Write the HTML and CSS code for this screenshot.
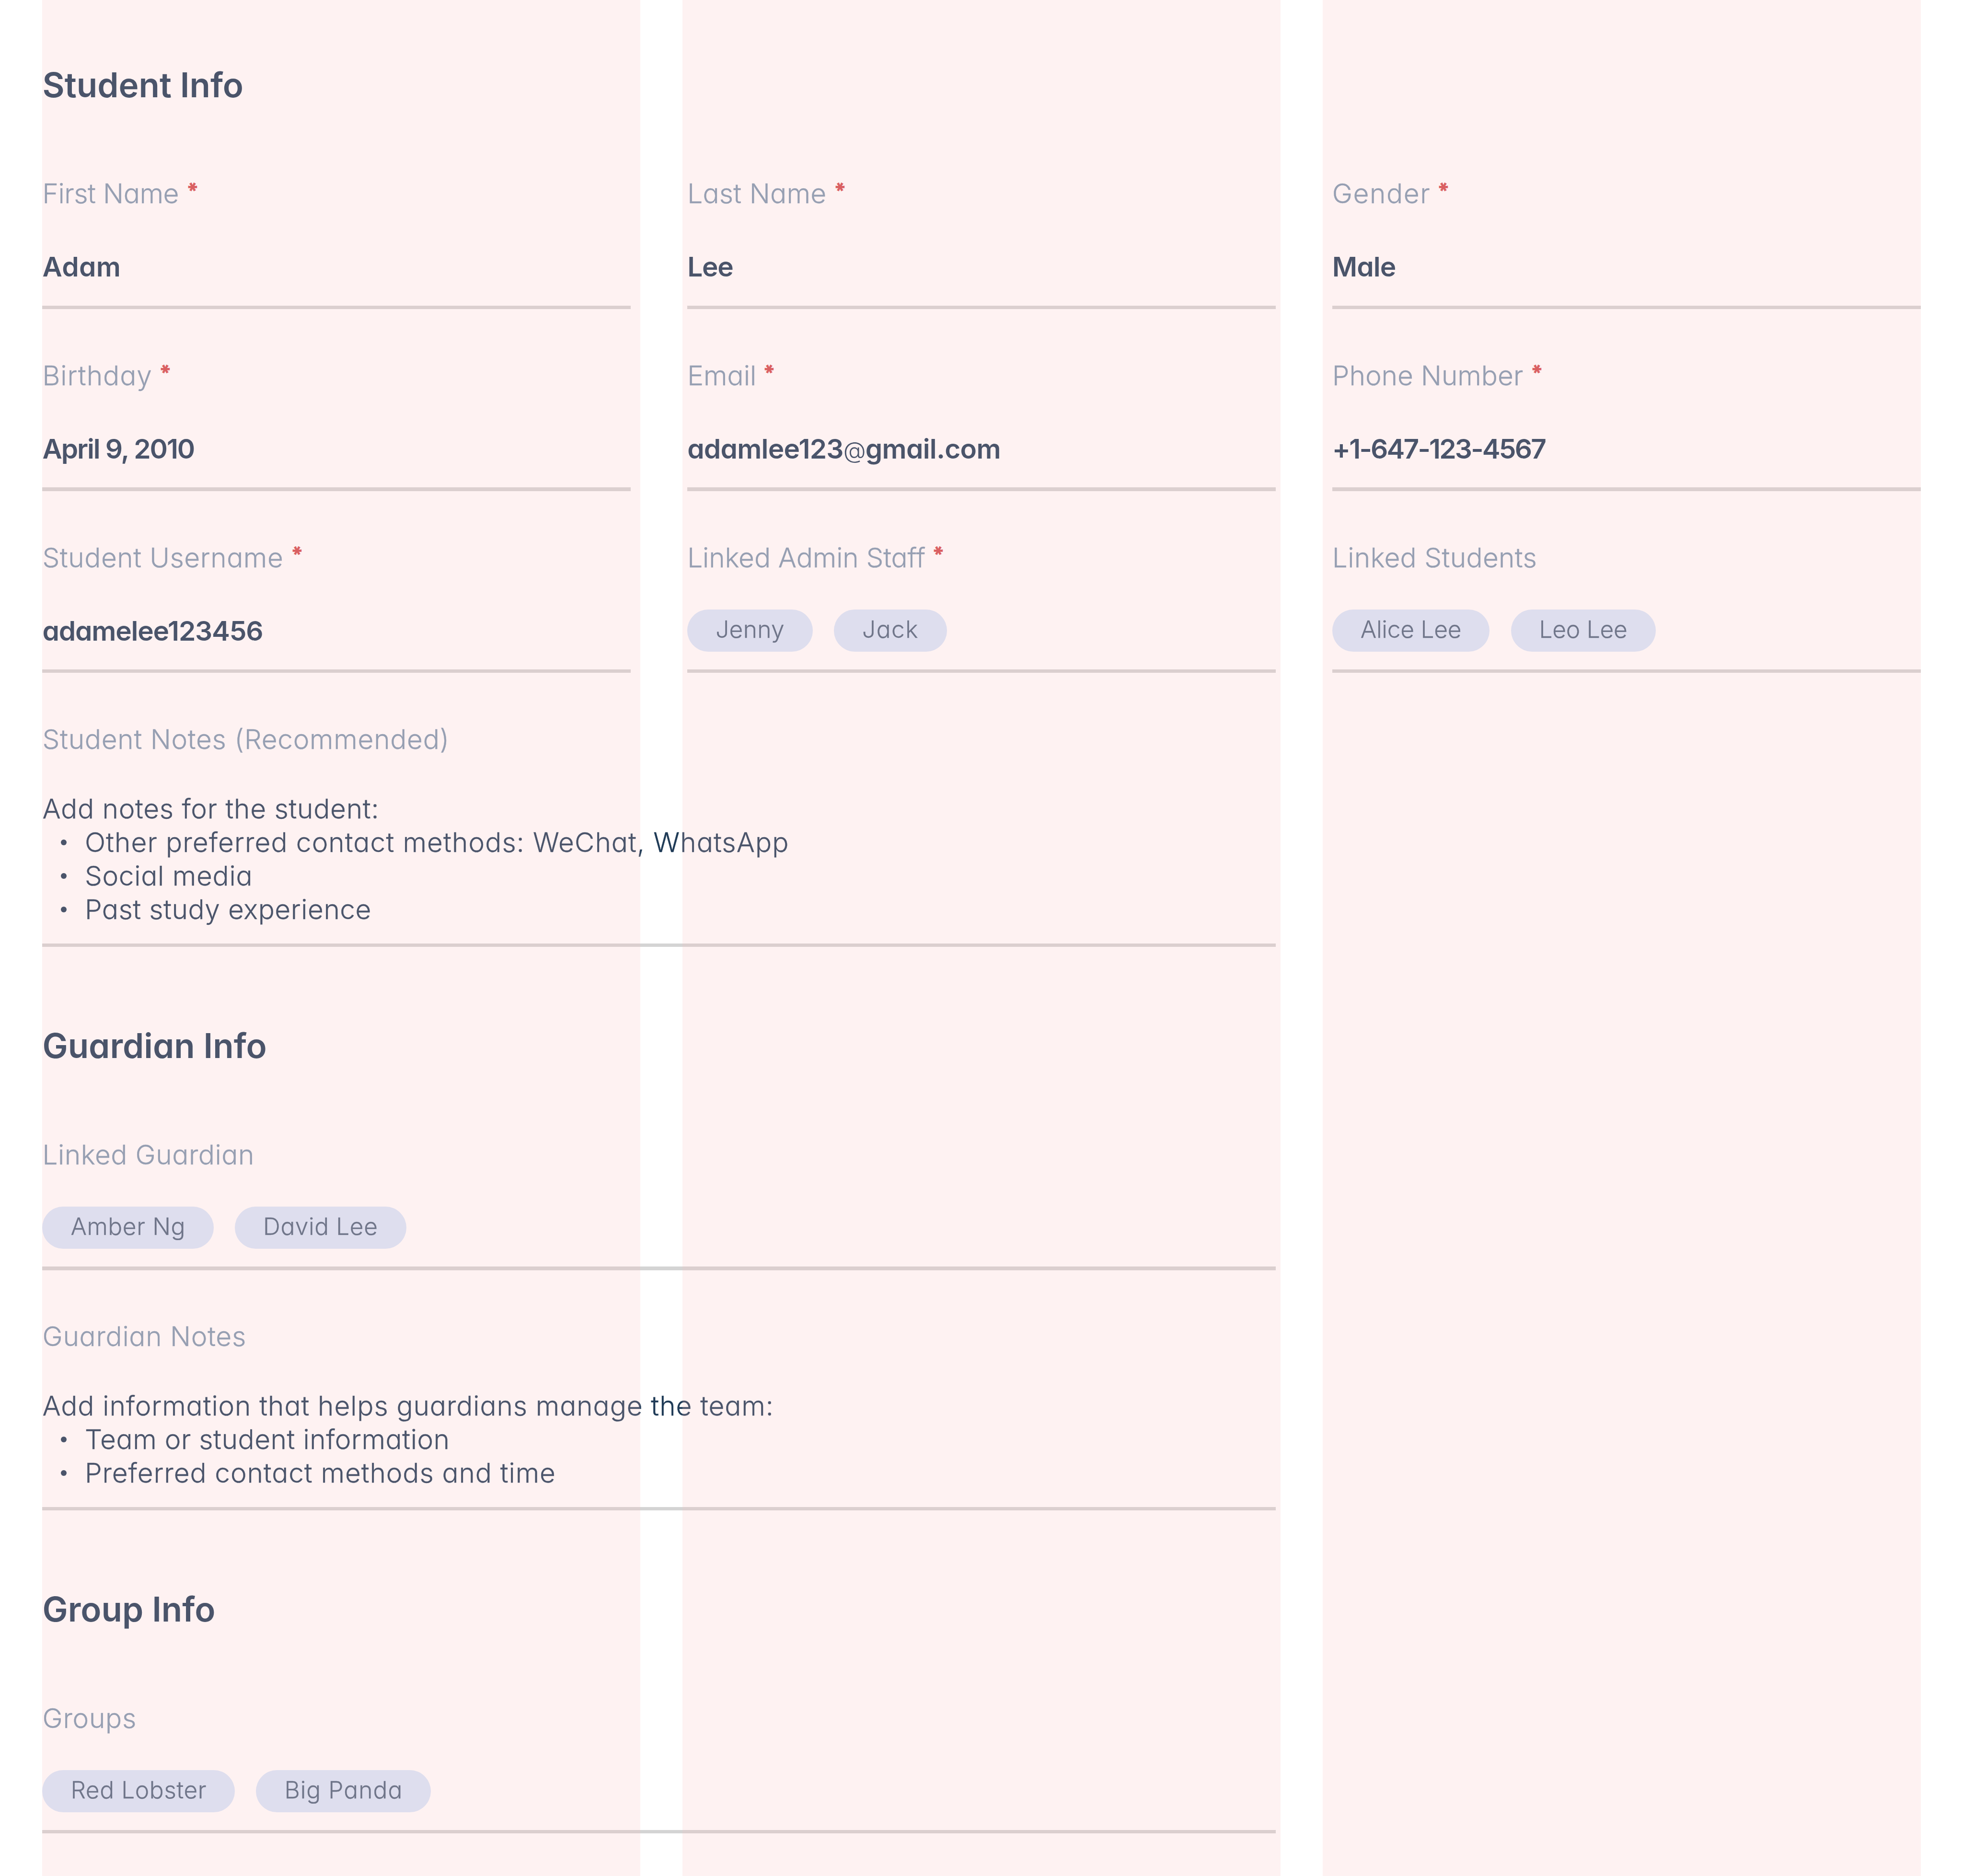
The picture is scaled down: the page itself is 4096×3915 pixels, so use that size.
FILE: index.html
```
<!DOCTYPE html>
<html lang="en">
<head>
<meta charset="utf-8">
<title>Student Info</title>
<link rel="stylesheet" href="styles.css">
</head>
<body>
<main class="page">
  <section class="section">
    <h2 class="heading">Student Info</h2>
    <div class="fields">
      <div class="field"><div class="label"><span class="fit-first-name">First Name</span><span class="required">*</span></div><div class="value fit-adam">Adam</div></div>
      <div class="field"><div class="label"><span class="fit-last-name">Last Name</span><span class="required">*</span></div><div class="value fit-lee">Lee</div></div>
      <div class="field"><div class="label"><span class="fit-gender">Gender</span><span class="required required-near">*</span></div><div class="value fit-male">Male</div></div>
      <div class="field"><div class="label"><span class="fit-birthday">Birthday</span><span class="required required-near">*</span></div><div class="value fit-date">April 9, 2010</div></div>
      <div class="field"><div class="label"><span>Email</span><span class="required required-near">*</span></div><div class="value fit-email">adamlee123<span class="at">@</span>gmail.com</div></div>
      <div class="field"><div class="label"><span>Phone Number</span><span class="required">*</span></div><div class="value fit-phone">+1-647-123-4567</div></div>
      <div class="field"><div class="label"><span class="fit-wide">Student Username</span><span class="required">*</span></div><div class="value fit-username">adamelee123456</div></div>
      <div class="field"><div class="label"><span class="fit-staff">Linked Admin Staff</span><span class="required required-near">*</span></div>
        <div class="pills"><span class="pill fit-jenny">Jenny</span><span class="pill fit-jack">Jack</span></div></div>
      <div class="field"><div class="label"><span class="fit-students">Linked Students</span></div>
        <div class="pills"><span class="pill fit-alice">Alice Lee</span><span class="pill fit-alice">Leo Lee</span></div></div>
      <div class="field field-wide"><div class="label"><span class="fit-wider">Student Notes (Recommended)</span></div>
        <div class="notes">
          <p class="note fit-wider">Add notes for the student:</p>
          <ul class="list">
            <li class="item fit-widest">Other preferred contact methods: WeChat, WhatsApp</li>
            <li class="item fit-wider">Social media</li>
            <li class="item fit-wide">Past study experience</li>
          </ul>
        </div></div>
    </div>
  </section>
  <section class="section">
    <h2 class="heading">Guardian Info</h2>
    <div class="fields">
      <div class="field field-wide"><div class="label"><span class="fit-wide">Linked Guardian</span></div>
        <div class="pills"><span class="pill">Amber Ng</span><span class="pill">David Lee</span></div></div>
      <div class="field field-wide"><div class="label"><span class="fit-wider">Guardian Notes</span></div>
        <div class="notes">
          <p class="note fit-info">Add information that helps guardians manage the team:</p>
          <ul class="list">
            <li class="item fit-wide">Team or student information</li>
            <li class="item fit-info">Preferred contact methods and time</li>
          </ul>
        </div></div>
    </div>
  </section>
  <section class="section">
    <h2 class="heading">Group Info</h2>
    <div class="fields">
      <div class="field field-wide"><div class="label"><span class="fit-wider">Groups</span></div>
        <div class="pills"><span class="pill">Red Lobster</span><span class="pill fit-panda">Big Panda</span></div></div>
    </div>
  </section>
  <div class="guides" aria-hidden="true"><div class="guide"></div><div class="guide"></div><div class="guide"></div></div>
</main>
</body>
</html>
```
FILE: styles.css
```
/* 1rem is one layout unit: the page is 1111 units wide */
html {
  font-size: calc(100vw / 1111);
}

body {
  margin: 0;
  background: #fff;
  color: #1e3a56;
  font-family: Inter, "Liberation Sans", sans-serif;
  font-feature-settings: "cv11";
}

.page {
  position: relative;
  box-sizing: border-box;
  width: 100vw;
  height: 100vh;
  padding: 0 24rem;
  overflow: hidden;
}

.heading {
  margin: 0;
  padding: 44.1rem 0 11.9rem;
  font-size: 19.26rem;
  font-weight: 600;
  line-height: 24rem;
}

.section:first-child .heading {
  padding-top: 36.1rem;
}

.fields {
  display: grid;
  grid-template-columns: repeat(3, 1fr);
  column-gap: 32rem;
}

.field {
  padding-top: 27.6rem;
}

.field::after {
  content: "";
  display: block;
  height: 2rem;
  margin-top: 10rem;
  background: #d4d4d4;
}

.field-wide {
  grid-column: 1 / span 2;
}

.label {
  height: 20rem;
  margin-bottom: 19.4rem;
  color: #7e98b0;
  font-size: 15.4rem;
  font-weight: 300;
  line-height: 20rem;
  white-space: nowrap;
  -webkit-text-stroke: 0.1rem currentColor;
}

.required {
  display: inline-block;
  margin-left: 4.6rem;
  color: #d2484a;
  font-size: 12rem;
  font-weight: 800;
  line-height: 1;
  vertical-align: 2.8rem;
  transform: rotate(90deg);
  transform-origin: 50% 0.32em;
}

.required-near {
  margin-left: 4rem;
}

.value {
  height: 24rem;
  font-size: 15.4rem;
  font-weight: 600;
  line-height: 24.4rem;
  white-space: nowrap;
}

.at {
  font-size: 0.85em;
  font-weight: 300;
}

.pills {
  display: flex;
  gap: 12rem;
  height: 24rem;
}

.pill {
  box-sizing: border-box;
  height: 24rem;
  padding: 0 16rem;
  border-radius: 12rem;
  background: #d7e6fa;
  color: #4d637c;
  font-size: 13.48rem;
  font-weight: 300;
  letter-spacing: 0.15rem;
  line-height: 22.6rem;
  white-space: nowrap;
  -webkit-text-stroke: 0.08rem currentColor;
}

.notes {
  margin-bottom: -0.3rem;
  padding-top: 0.3rem;
  font-size: 15.4rem;
  font-weight: 300;
  line-height: 19rem;
  white-space: nowrap;
  -webkit-text-stroke: 0.1rem currentColor;
}

.note {
  margin: 0;
}

.list {
  margin: 0;
  padding: 0;
  list-style: none;
}

.item {
  display: flex;
  align-items: center;
}

.item::before {
  content: "";
  width: 3.2rem;
  height: 3.2rem;
  margin: 0 10.4rem;
  border-radius: 50%;
  background: currentColor;
}

/* Tracking */
.fit-first-name { letter-spacing: -0.12rem; }
.fit-last-name { letter-spacing: 0.06rem; }
.fit-gender { letter-spacing: 0.43rem; }
.fit-birthday { letter-spacing: 0.26rem; }
.fit-staff { letter-spacing: -0.03rem; }
.fit-students { letter-spacing: 0.08rem; }
.fit-wide { letter-spacing: 0.14rem; }
.fit-wider { letter-spacing: 0.19rem; }
.fit-info { letter-spacing: 0.24rem; }
.fit-widest { letter-spacing: 0.29rem; }
.fit-adam { letter-spacing: 0.1rem; }
.fit-lee { letter-spacing: -0.35rem; }
.fit-male { letter-spacing: -0.25rem; }
.fit-date { letter-spacing: -0.57rem; }
.fit-email { letter-spacing: -0.2rem; }
.fit-phone { letter-spacing: -0.76rem; }
.fit-username { letter-spacing: -0.32rem; }
.fit-jenny { letter-spacing: 0.08rem; }
.fit-jack { letter-spacing: 0.4rem; }
.fit-alice { letter-spacing: -0.07rem; }
.fit-panda { letter-spacing: 0.28rem; }

/* Column guides, tinted over the content */
.guides {
  position: absolute;
  inset: 0 24rem;
  display: grid;
  grid-template-columns: repeat(3, 1fr);
  column-gap: 24rem;
  pointer-events: none;
}

.guide {
  background: rgba(252, 190, 189, 0.2);
}
```
